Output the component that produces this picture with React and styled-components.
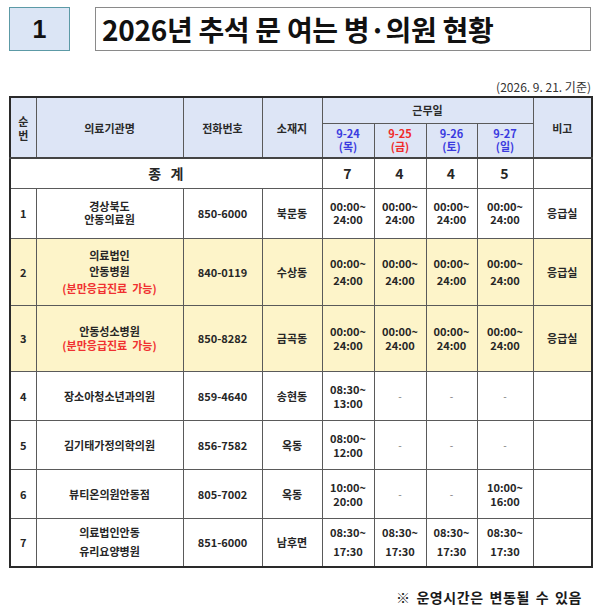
import React from 'react';
import styled, { createGlobalStyle } from 'styled-components';

const GlobalStyle = createGlobalStyle`
	body {
		margin: 0;
		background: #fff;
		font-family: "Noto Sans CJK KR", "Noto Sans", sans-serif;
		color: #1e1e1e;
	}
`;

const FONT = `"Noto Sans CJK KR", "Noto Sans", sans-serif`;

const hospitals = [
	{ no: 1, name: ['경상북도', '안동의료원'], tel: '850-6000', area: '북문동', times: ['00:00~|24:00', '00:00~|24:00', '00:00~|24:00', '00:00~|24:00'], memo: '응급실', lh: 13.5 },
	{ no: 2, name: ['의료법인', '안동병원'], red: true, tel: '840-0119', area: '수상동', times: ['00:00~|24:00', '00:00~|24:00', '00:00~|24:00', '00:00~|24:00'], memo: '응급실', hi: true, lh: 16.5 },
	{ no: 3, name: ['안동성소병원'], red: true, tel: '850-8282', area: '금곡동', times: ['00:00~|24:00', '00:00~|24:00', '00:00~|24:00', '00:00~|24:00'], memo: '응급실', hi: true, lh: 14.5 },
	{ no: 4, name: ['장소아청소년과의원'], tel: '859-4640', area: '송현동', times: ['08:30~|13:00', '-', '-', '-'], memo: '', lh: 14 },
	{ no: 5, name: ['김기태가정의학의원'], tel: '856-7582', area: '옥동', times: ['08:00~|12:00', '-', '-', '-'], memo: '', lh: 14 },
	{ no: 6, name: ['뷰티온의원안동점'], tel: '805-7002', area: '옥동', times: ['10:00~|20:00', '-', '-', '10:00~|16:00'], memo: '', lh: 14 },
	{ no: 7, name: ['의료법인안동', '유리요양병원'], tel: '851-6000', area: '남후면', times: ['08:30~|17:30', '08:30~|17:30', '08:30~|17:30', '08:30~|17:30'], memo: '', lh: 19 }
];

const rowHeights = [50, 67, 66, 49, 49, 49, 49];

const days = [
	{ date: '9-24', day: '(목)', color: '#3a3ae0' },
	{ date: '9-25', day: '(금)', color: '#f02b2b' },
	{ date: '9-26', day: '(토)', color: '#3a3ae0' },
	{ date: '9-27', day: '(일)', color: '#3a3ae0' }
];

const totals = [7, 4, 4, 5];
const colWidths = [26, 147, 79, 60, 52, 52, 51, 56, 59];

export default function App() {
	return (
		<Page>
			<GlobalStyle />
			<TitleBar>
				<NumberBox>1</NumberBox>
				<TitleBox>2026년 추석 문 여는 병·의원 현황</TitleBox>
			</TitleBar>
			<DateNote>(2026. 9. 21. 기준)</DateNote>
			<Table>
				<colgroup>
					{colWidths.map((w, i) => (
						<col key={i} style={{ width: w }} />
					))}
				</colgroup>
				<thead>
					<tr style={{ height: 26 }}>
						<Th rowSpan={2}>
							순<br />번
						</Th>
						<Th rowSpan={2}>의료기관명</Th>
						<Th rowSpan={2}>전화번호</Th>
						<Th rowSpan={2}>소재지</Th>
						<Th colSpan={4}>근무일</Th>
						<Th rowSpan={2}>비고</Th>
					</tr>
					<tr style={{ height: 35 }}>
						{days.map(d => (
							<DayHead key={d.date} $color={d.color}>
								{d.date}
								<br />
								{d.day}
							</DayHead>
						))}
					</tr>
				</thead>
				<tbody>
					<TotalRow>
						<Td colSpan={4} $big>
							종&nbsp;&nbsp;계
						</Td>
						{totals.map((t, i) => (
							<Td key={i} $big>
								{t}
							</Td>
						))}
						<Td />
					</TotalRow>
					{hospitals.map((h, i) => (
						<Row key={h.no} $hi={h.hi} style={{ height: rowHeights[i] }}>
							<Td>{h.no}</Td>
							<Td $lh={h.lh}>
								{h.name.map(n => (
									<div key={n}>{n}</div>
								))}
								{h.red && <RedNote>(분만응급진료&nbsp;&nbsp;가능)</RedNote>}
							</Td>
							<Td>{h.tel}</Td>
							<Td>{h.area}</Td>
							{h.times.map((t, j) =>
								t === '-' ? (
									<Td key={j}>
										<Dash>-</Dash>
									</Td>
								) : (
									<Td key={j} $lh={h.lh}>
										{t.split('|').map(p => (
											<div key={p}>{p}</div>
										))}
									</Td>
								)
							)}
							<Td>{h.memo}</Td>
						</Row>
					))}
				</tbody>
			</Table>
			<Footnote>※ 운영시간은 변동될 수 있음</Footnote>
		</Page>
	);
}

const Page = styled.div`
	width: 600px;
	box-sizing: border-box;
	padding: 7px 9px 0 9px;
`;

const TitleBar = styled.div`
	display: flex;
	gap: 25px;
	height: 44px;
`;

const NumberBox = styled.div`
	width: 61px;
	box-sizing: border-box;
	background: #dbe5f5;
	border: 1.5px solid #5c9aa6;
	display: flex;
	align-items: center;
	justify-content: center;
	font-family: "Liberation Sans", Arial, sans-serif;
	font-weight: 700;
	font-size: 25px;
	color: #111;
`;

const TitleBox = styled.div`
	flex: 1;
	box-sizing: border-box;
	border: 1px solid #8a8a8a;
	display: flex;
	align-items: center;
	padding-left: 6px;
	font-family: ${FONT};
	font-weight: 700;
	font-size: 28px;
	letter-spacing: -0.3px;
	color: #111;
`;

const DateNote = styled.div`
	margin-top: 28px;
	text-align: right;
	font-family: ${FONT};
	font-size: 12px;
	line-height: 16px;
	color: #333;
	padding-bottom: 1px;
`;

const Table = styled.table`
	width: 582px;
	table-layout: fixed;
	border-collapse: collapse;
	border: 2px solid #2a2a2a;
	font-family: ${FONT};
	font-size: 11px;
	font-weight: 700;
	color: #262626;
`;

const Th = styled.th`
	background: #dde5f6;
	border: 1px solid #5a5a5a;
	font-size: 11px;
	font-weight: 700;
	line-height: 14px;
	padding: 0;
	color: #2a2a2a;
	text-align: center;
	vertical-align: middle;
`;

const DayHead = styled(Th)`
	color: ${p => p.$color};
	line-height: 13.5px;
	border-bottom: 2px solid #444;
`;

const Td = styled.td`
	border: 1px solid #5a5a5a;
	padding: 0;
	text-align: center;
	vertical-align: middle;
	font-size: ${p => (p.$big ? '14px' : '11px')};
	line-height: ${p => (p.$lh ? p.$lh + 'px' : '14px')};
	letter-spacing: ${p => (p.$big ? '1px' : '0')};
	white-space: nowrap;
`;

const TotalRow = styled.tr`
	height: 30px;
	td {
		border-top: 2px solid #444;
	}
`;

const Row = styled.tr`
	background: ${p => (p.$hi ? '#fdf4c9' : '#fff')};
`;

const RedNote = styled.div`
	color: #f03030;
	white-space: pre;
`;

const Dash = styled.span`
	color: #777;
	font-weight: 400;
	font-size: 10px;
`;

const Footnote = styled.div`
	margin-top: 21px;
	padding-right: 9px;
	text-align: right;
	font-family: ${FONT};
	font-weight: 700;
	font-size: 14px;
	line-height: 16px;
	letter-spacing: 0.6px;
	word-spacing: 2px;
	color: #1a1a1a;
`;
